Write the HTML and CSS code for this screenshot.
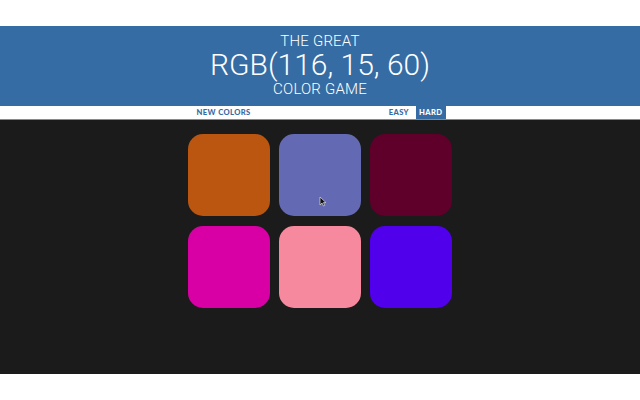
FILE: index.html
```html
<!DOCTYPE html>
<html>
<head>
<meta charset="utf-8">
<link rel="stylesheet" href="styles.css">
</head>
<body>
<div class="page">
  <header class="header">
    <div class="title-small">THE GREAT</div>
    <div class="title-rgb">RGB(116, 15, 60)</div>
    <div class="title-small">COLOR GAME</div>
  </header>
  <nav class="stripe">
    <div class="stripe-inner">
      <button class="btn">NEW COLORS</button>
      <span class="spacer"></span>
      <button class="btn easy">EASY</button>
      <button class="btn selected">HARD</button>
    </div>
  </nav>
  <main class="game">
    <div class="grid">
      <div class="square" style="background:#bb5610"></div>
      <div class="square with-cursor" style="background:#6469b3">
        <svg class="cursor" width="8" height="11" viewBox="0 0 8 11"><path d="M1 1 L1 9 L3 7 L4.5 10 L5.8 9.4 L4.4 6.6 L7 6.6 Z" fill="#111" stroke="#ddd" stroke-width="0.7"/></svg>
      </div>
      <div class="square" style="background:#5e0029"></div>
      <div class="square" style="background:#d800a4"></div>
      <div class="square" style="background:#f7899e"></div>
      <div class="square" style="background:#5000ea"></div>
    </div>
  </main>
</div>
</body>
</html>
```
FILE: styles.css
```css
* { box-sizing: border-box; }
html, body { margin: 0; padding: 0; background: #ffffff; }
body { width: 640px; height: 400px; overflow: hidden; font-family: "Roboto", "Liberation Sans", sans-serif; }
.page { padding-top: 26px; }
.header {
  height: 80px;
  padding-top: 7px;
  background: #366ca4;
  color: #ffffff;
  text-align: center;
  font-weight: 300;
}
.title-small { font-size: 15px; line-height: 16px; height: 16px; letter-spacing: 0.2px; }
.title-rgb { font-size: 30px; line-height: 32px; height: 32px; }
.stripe {
  height: 14px;
  background: #ffffff;
  border-bottom: 1px solid #8a8a8a;
}
.stripe-inner {
  width: 273px;
  margin: 0 auto;
  height: 13px;
  display: flex;
  align-items: stretch;
  padding-left: 10px;
  padding-right: 11px;
}
.spacer { flex: 1; }
.btn {
  border: none;
  background: none;
  color: #366ca4;
  font-family: "Lato", "Liberation Sans", sans-serif;
  font-weight: 900;
  font-size: 7.6px;
  letter-spacing: 0.4px;
  padding: 0 3px;
  margin: 0;
  height: 13px;
  line-height: 13px;
}
.btn.easy { margin-right: 4px; }
.btn.selected { background: #366ca4; color: #ffffff; }
.game {
  height: 254px;
  background: #1b1b1b;
  padding-top: 14px;
}
.grid {
  width: 273px;
  margin: 0 auto;
  display: grid;
  grid-template-columns: repeat(3, 82px);
  column-gap: 9px;
  row-gap: 10px;
  justify-content: center;
}
.square {
  width: 82px;
  height: 82px;
  border-radius: 15px;
}
.with-cursor { position: relative; }
.cursor { position: absolute; left: 40px; top: 62px; }
```
